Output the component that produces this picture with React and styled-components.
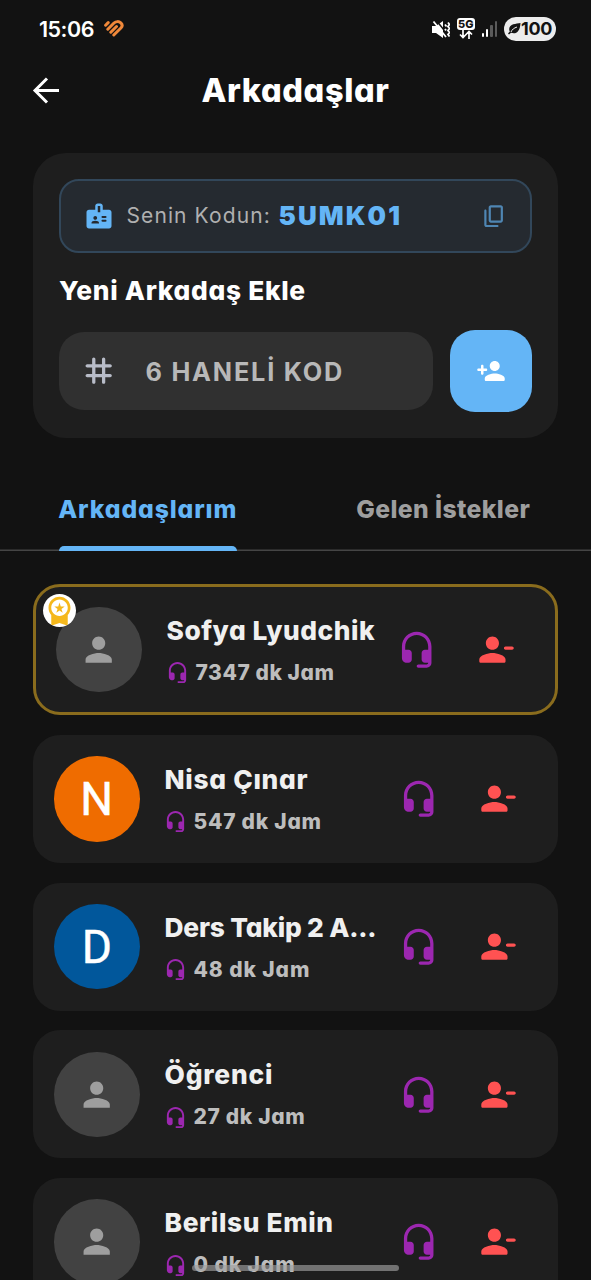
import React from 'react';
import styled, { createGlobalStyle } from 'styled-components';

const GlobalStyle = createGlobalStyle`
  * {
    box-sizing: border-box;
  }

  html,
  body {
    margin: 0;
    height: 1280px;
    overflow: hidden;
    background: #121212;
  }

  body {
    font-family: Inter, sans-serif;
    font-feature-settings: 'cv11';
    font-weight: 700;
    color: white;
  }
`;

const Screen = styled.div`
  position: relative;
  width: 591px;
  height: 1280px;
  overflow: hidden;
  background: #121212;
`;

const Svg = styled.svg`
  display: block;
  flex: none;
  width: ${p => p.$size}px;
  height: ${p => p.$size}px;
  fill: currentColor;
`;

const paths = {
  headset:
    'M12 1c-4.97 0-9 4.03-9 9v7c0 1.66 1.34 3 3 3h1c1.1 0 2-.9 2-2v-4c0-1.1-.9-2-2-2H5v-2c0-3.87 3.13-7 7-7s7 3.13 7 7v2h-2c-1.1 0-2 .9-2 2v4c0 1.1.9 2 2 2h2c0 .55-.45 1-1 1h-5c-.55 0-1 .45-1 1s.45 1 1 1h5c1.66 0 3-1.34 3-3V10c0-4.97-4.03-9-9-9z',
  remove:
    'M14 8c0-2.21-1.79-4-4-4S6 5.79 6 8s1.79 4 4 4 4-1.79 4-4zM2 18v1c0 .55.45 1 1 1h14c.55 0 1-.45 1-1v-1c0-2.66-5.33-4-8-4s-8 1.34-8 4zM18 10h4c.55 0 1 .45 1 1s-.45 1-1 1h-4c-.55 0-1-.45-1-1s.45-1 1-1z',
  add:
    'M15 12c2.21 0 4-1.79 4-4s-1.79-4-4-4-4 1.79-4 4 1.79 4 4 4zm-9-2V8c0-.55-.45-1-1-1s-1 .45-1 1v2H2c-.55 0-1 .45-1 1s.45 1 1 1h2v2c0 .55.45 1 1 1s1-.45 1-1v-2h2c.55 0 1-.45 1-1s-.45-1-1-1H6zm9 4c-2.67 0-8 1.34-8 4v1c0 .55.45 1 1 1h14c.55 0 1-.45 1-1v-1c0-2.66-5.33-4-8-4z',
  person:
    'M12 12c2.21 0 4-1.79 4-4s-1.79-4-4-4-4 1.79-4 4 1.79 4 4 4zm0 2c-2.67 0-8 1.34-8 4v2h16v-2c0-2.66-5.33-4-8-4z',
  badge:
    'M20 7h-5V4c0-1.1-.9-2-2-2h-2c-1.1 0-2 .9-2 2v3H4c-1.1 0-2 .9-2 2v11c0 1.1.9 2 2 2h16c1.1 0 2-.9 2-2V9c0-1.1-.9-2-2-2zM9 12c.83 0 1.5.67 1.5 1.5S9.83 15 9 15s-1.5-.67-1.5-1.5S8.17 12 9 12zm3 6H6v-.43c0-.6.36-1.15.92-1.39.64-.28 1.34-.43 2.08-.43s1.44.15 2.08.43c.55.24.92.78.92 1.39V18zm1-9h-2V4h2v5zm4.25 7.5h-2.5c-.41 0-.75-.34-.75-.75s.34-.75.75-.75h2.5c.41 0 .75.34.75.75s-.34.75-.75.75zm0-3h-2.5c-.41 0-.75-.34-.75-.75s.34-.75.75-.75h2.5c.41 0 .75.34.75.75s-.34.75-.75.75z',
  copy:
    'M15 20H5V7c0-.55-.45-1-1-1s-1 .45-1 1v13c0 1.1.9 2 2 2h10c.55 0 1-.45 1-1s-.45-1-1-1zm5-4V4c0-1.1-.9-2-2-2H9c-1.1 0-2 .9-2 2v12c0 1.1.9 2 2 2h9c1.1 0 2-.9 2-2zm-2 0H9V4h9v12z',
  tag:
    'M20 9c0-.55-.45-1-1-1h-3V5c0-.55-.45-1-1-1s-1 .45-1 1v3h-4V5c0-.55-.45-1-1-1s-1 .45-1 1v3H5c-.55 0-1 .45-1 1s.45 1 1 1h3v4H5c-.55 0-1 .45-1 1s.45 1 1 1h3v3c0 .55.45 1 1 1s1-.45 1-1v-3h4v3c0 .55.45 1 1 1s1-.45 1-1v-3h3c.55 0 1-.45 1-1s-.45-1-1-1h-3v-4h3c.55 0 1-.45 1-1zm-6 5h-4v-4h4v4z',
  premium:
    'M9.68 13.69 12 11.93l2.31 1.76-.88-2.85L15.75 9h-2.84L12 6.19 11.09 9H8.25l2.31 1.84-.88 2.85zM20 10c0-4.42-3.58-8-8-8s-8 3.58-8 8c0 2.03.76 3.87 2 5.28V23l6-2 6 2v-7.72c1.24-1.41 2-3.25 2-5.28zm-8-6c3.31 0 6 2.69 6 6s-2.69 6-6 6-6-2.69-6-6 2.69-6 6-6z'
};

const Icon = ({ name, size = 39.4, ...rest }) => (
  <Svg viewBox="0 0 24 24" $size={size} {...rest}>
    <path d={paths[name]} />
  </Svg>
);

const Text = styled.span`
  display: block;
  white-space: nowrap;
  font-size: ${p => p.$size}px;
  line-height: ${p => p.$line || 40}px;
  font-weight: ${p => p.$weight || 700};
  letter-spacing: ${p => p.$track || 0}px;
  color: ${p => p.$color || 'white'};
`;

const StatusBar = styled.div`
  display: flex;
  align-items: center;
  height: 58px;
  padding: 0 35px 0 39px;
`;

const Heart = styled.svg`
  width: 21px;
  height: 18px;
  margin-left: 9px;
`;

const StatusIcons = styled.div`
  display: flex;
  align-items: center;
  margin-left: auto;
`;

const MuteIcon = styled.svg`
  width: 18px;
  height: 19px;
  margin-right: 7px;
`;

const Network = styled.div`
  display: flex;
  flex-direction: column;
  align-items: center;
  width: 18px;
  height: 22px;
  margin-right: 7px;
`;

const NetworkLabel = styled.span`
  width: 18px;
  height: 12px;
  border-radius: 3px;
  background: white;
  color: #121212;
  font-size: 11px;
  line-height: 12px;
  font-weight: 800;
  text-align: center;
`;

const Signal = styled.div`
  display: flex;
  align-items: flex-end;
  gap: 2px;
  height: 16px;
  margin-right: 7px;
`;

const SignalBar = styled.span`
  width: 2.3px;
  height: ${p => p.$height}px;
  border-radius: 1px;
  background: ${p => (p.$on ? 'white' : '#5a5a5a')};
`;

const Battery = styled.div`
  display: flex;
  align-items: center;
  justify-content: center;
  width: 52px;
  height: 24px;
  border-radius: 12px;
  background: #ececec;
`;

const AppBar = styled.header`
  display: grid;
  grid-template-columns: 60px 1fr 60px;
  align-items: center;
  height: 65px;
  padding: 0 16px;
`;

const BackButton = styled.button`
  display: flex;
  justify-content: center;
  padding: 0;
  border: 0;
  background: none;
  color: white;
`;

const Title = styled(Text)`
  text-align: center;
`;

const AddCard = styled.section`
  height: 285px;
  margin: 30px 33px 0;
  padding: 26px;
  border-radius: 33px;
  background: #1e1e1e;
`;

const CodeBox = styled.div`
  display: flex;
  align-items: center;
  height: 74px;
  padding: 0 23px;
  border: 2px solid #32475a;
  border-radius: 20px;
  background: #252a30;
`;

const CodeLabel = styled(Text)`
  width: 152px;
  margin-left: 12.5px;
`;

const CopyIcon = styled(Icon)`
  margin-left: auto;
`;

const AddTitle = styled(Text)`
  margin-top: 18px;
`;

const AddRow = styled.div`
  display: flex;
  align-items: center;
  gap: 17px;
  margin-top: 19px;
`;

const CodeInput = styled.div`
  display: flex;
  align-items: center;
  gap: 27px;
  width: 374px;
  height: 78px;
  padding-left: 20px;
  border-radius: 25px;
  background: #303030;
`;

const Placeholder = styled(Text)`
  padding-top: 2px;
`;

const AddButton = styled.button`
  display: flex;
  align-items: center;
  justify-content: center;
  width: 82px;
  height: 82px;
  padding: 0;
  border: 0;
  border-radius: 25px;
  background: #64b5f6;
  color: white;
`;

const Tabs = styled.nav`
  display: grid;
  grid-template-columns: 1fr 1fr;
  height: 79px;
  margin-top: 34px;
  box-shadow: inset 0 -1.5px #454545;
`;

const Tab = styled.div`
  display: flex;
  flex-direction: column;
  align-items: center;
  justify-content: space-between;
  padding-top: 17px;
`;

const TabLine = styled.span`
  width: 178px;
  height: 5px;
  border-radius: 5px 5px 0 0;
  background: #64b5f6;
`;

const List = styled.div`
  display: flex;
  flex-direction: column;
  gap: 19.8px;
  padding: 33px 33px 0;
`;

const FriendCard = styled.article`
  display: flex;
  flex: none;
  align-items: center;
  position: relative;
  height: ${p => (p.$first ? 131 : 128)}px;
  padding: 0 ${p => (p.$first ? 20 : 21)}px;
  border: ${p => (p.$first ? '3px solid #8a6c1d' : '0')};
  border-radius: 27px;
  background: #1e1e1e;
`;

const Avatar = styled.div`
  display: flex;
  flex: none;
  align-items: center;
  justify-content: center;
  width: 85.5px;
  height: 85.5px;
  border-radius: 50%;
  background: ${p => p.$color || '#424242'};
  color: #9e9e9e;
`;

const Initial = styled.span`
  font-family: Roboto, sans-serif;
  font-size: 46px;
  line-height: 85px;
  padding-top: 2px;
  font-weight: 400;
  -webkit-text-stroke: 0.5px white;
  color: white;
`;

const Medal = styled.div`
  position: absolute;
  top: 7px;
  left: 6.5px;
  width: 33px;
  height: 33px;
  border-radius: 50%;
  overflow: hidden;
  background: white;
  color: #f5b81c;
`;

const Info = styled.div`
  flex: 1;
  min-width: 0;
  margin: 3px 0 0 25px;
`;

const Minutes = styled.div`
  display: flex;
  align-items: center;
  gap: 7px;
  margin: 5px 0 0 -1px;
`;

const Action = styled.button`
  display: flex;
  flex: none;
  justify-content: center;
  width: 79px;
  padding: 0;
  border: 0;
  background: none;
  color: ${p => p.$color};
`;

const HomeBar = styled.div`
  position: absolute;
  left: 192px;
  bottom: 9px;
  width: 207px;
  height: 6px;
  border-radius: 3px;
  background: rgba(160, 160, 160, 0.65);
`;

const friends = [
  { name: 'Sofya Lyudchik', minutes: '7347 dk Jam', track: 0.55, subTrack: 0.55 },
  { name: 'Nisa Çınar', minutes: '547 dk Jam', track: 0.7, subTrack: 0.75 },
  { name: 'Ders Takip 2 A...', minutes: '48 dk Jam', track: -0.2, subTrack: 0.9 },
  { name: 'Öğrenci', minutes: '27 dk Jam', track: 0.8, subTrack: 0.65 },
  { name: 'Berilsu Emin', minutes: '0 dk Jam', track: 0.65, subTrack: 0.9 }
];

const initials = {
  'Nisa Çınar': { letter: 'N', color: '#ef6c00' },
  'Ders Takip 2 A...': { letter: 'D', color: '#01579b' }
};

const Friend = ({ friend, first }) => {
  const initial = initials[friend.name];

  return (
    <FriendCard $first={first}>
      <Avatar $color={initial?.color}>
        {initial ? <Initial>{initial.letter}</Initial> : <Icon name="person" />}
      </Avatar>
      {first && (
        <Medal>
          <Icon name="premium" size={33} />
        </Medal>
      )}
      <Info>
        <Text $size={26.3} $line={38} $weight={800} $track={friend.track} $color="#f0f0f0">
          {friend.name}
        </Text>
        <Minutes>
          <Icon name="headset" size={23} color="#9c27b0" />
          <Text $size={21} $line={36} $weight={760} $track={friend.subTrack} $color="#bdbdbd">
            {friend.minutes}
          </Text>
        </Minutes>
      </Info>
      <Action $color="#9c27b0">
        <Icon name="headset" />
      </Action>
      <Action $color="#ff5252">
        <Icon name="remove" />
      </Action>
    </FriendCard>
  );
};

const App = () => (
  <Screen>
    <GlobalStyle />
    <StatusBar>
      <Text $size={21.5} $weight={600} $track={-0.5}>15:06</Text>
      <Heart viewBox="0 0 21 18" fill="none" stroke="#f0883a" strokeWidth="3" strokeLinecap="round" strokeLinejoin="round">
        <path d="M2.600 5.200 5.200 2.600M4.800 9.200 11 3c2-1.800 5-1.800 6.800-.2 1.700 1.600 1.600 3.600.1 5.200L10.800 15M7.800 12.200l5.700-5.700" />
      </Heart>
      <StatusIcons>
        <MuteIcon viewBox="0 0 18 19" fill="white">
          <path d="M0 6h4l7-5v17l-7-5H0z" />
          <path d="M4 0 16 15" stroke="#121212" strokeWidth="1.500" />
          <path d="m1.500 1.500 12.500 15.500M13 4.500l1.500 2M16 2.500l1.500 2L16 6.500l1.500 2-1.500 2 1.500 2-1.500 2 1.500 2M13 9l1 1.500" fill="none" stroke="white" strokeWidth="1.800" />
        </MuteIcon>
        <Network>
          <NetworkLabel>5G</NetworkLabel>
          <svg width="14" height="9" viewBox="0 0 14 9" fill="none" stroke="white" strokeWidth="1.700">
            <path d="M4 0v7M1 4.500l3 3 3-3M10 9V2M7 4.500l3-3 3 3" />
          </svg>
        </Network>
        <Signal>
          <SignalBar $height={4} $on />
          <SignalBar $height={8} $on />
          <SignalBar $height={12} />
          <SignalBar $height={16} />
        </Signal>
        <Battery>
          <svg width="13" height="12" viewBox="0 0 13 12">
            <path d="M12.500 0C8 1 1.500.5 1.200 6c0 1 .1 1.700.6 2.500L0 10.500l1 1 2-1.700c5 1.700 9-.8 9.500-9.800z" fill="#121212" />
            <path d="M3 9c1-2.500 3-4 6-5" stroke="#ececec" fill="none" />
          </svg>
          <Text $size={18} $line={24} $track={-0.3} $color="#121212">100</Text>
        </Battery>
      </StatusIcons>
    </StatusBar>

    <AppBar>
      <BackButton>
        <svg width="28" height="28" viewBox="0 0 28 28" fill="none" stroke="white" strokeWidth="3">
          <path d="M27 13.500H3M15 1.500 3 13.500l12 12" />
        </svg>
      </BackButton>
      <Title $size={32.5} $weight={800} $track={0.6}>Arkadaşlar</Title>
    </AppBar>

    <AddCard>
      <CodeBox>
        <Icon name="badge" size={30} color="#64b5f6" />
        <CodeLabel $size={21} $weight={400} $track={1.1} $color="#b0b0b0">
          Senin Kodun:
        </CodeLabel>
        <Text $size={26} $weight={900} $track={2.1} $color="#64b5f6">5UMK01</Text>
        <CopyIcon name="copy" size={26.3} color="#4f86b3" />
      </CodeBox>
      <AddTitle $size={26.3} $weight={800} $track={0.7}>Yeni Arkadaş Ekle</AddTitle>
      <AddRow>
        <CodeInput>
          <Icon name="tag" color="#b8bcc8" />
          <Placeholder $size={25.3} $track={1.8} $color="#b8b8b8">6 HANELİ KOD</Placeholder>
        </CodeInput>
        <AddButton>
          <Icon name="add" size={30} />
        </AddButton>
      </AddRow>
    </AddCard>

    <Tabs>
      <Tab>
        <Text $size={24.7} $weight={760} $track={0.9} $color="#64b5f6">Arkadaşlarım</Text>
        <TabLine />
      </Tab>
      <Tab>
        <Text $size={24.7} $weight={760} $track={0.4} $color="#9e9e9e">Gelen İstekler</Text>
      </Tab>
    </Tabs>

    <List>
      {friends.map((friend, i) => (
        <Friend key={friend.name} friend={friend} first={i === 0} />
      ))}
    </List>
    <HomeBar />
  </Screen>
);

export default App;
